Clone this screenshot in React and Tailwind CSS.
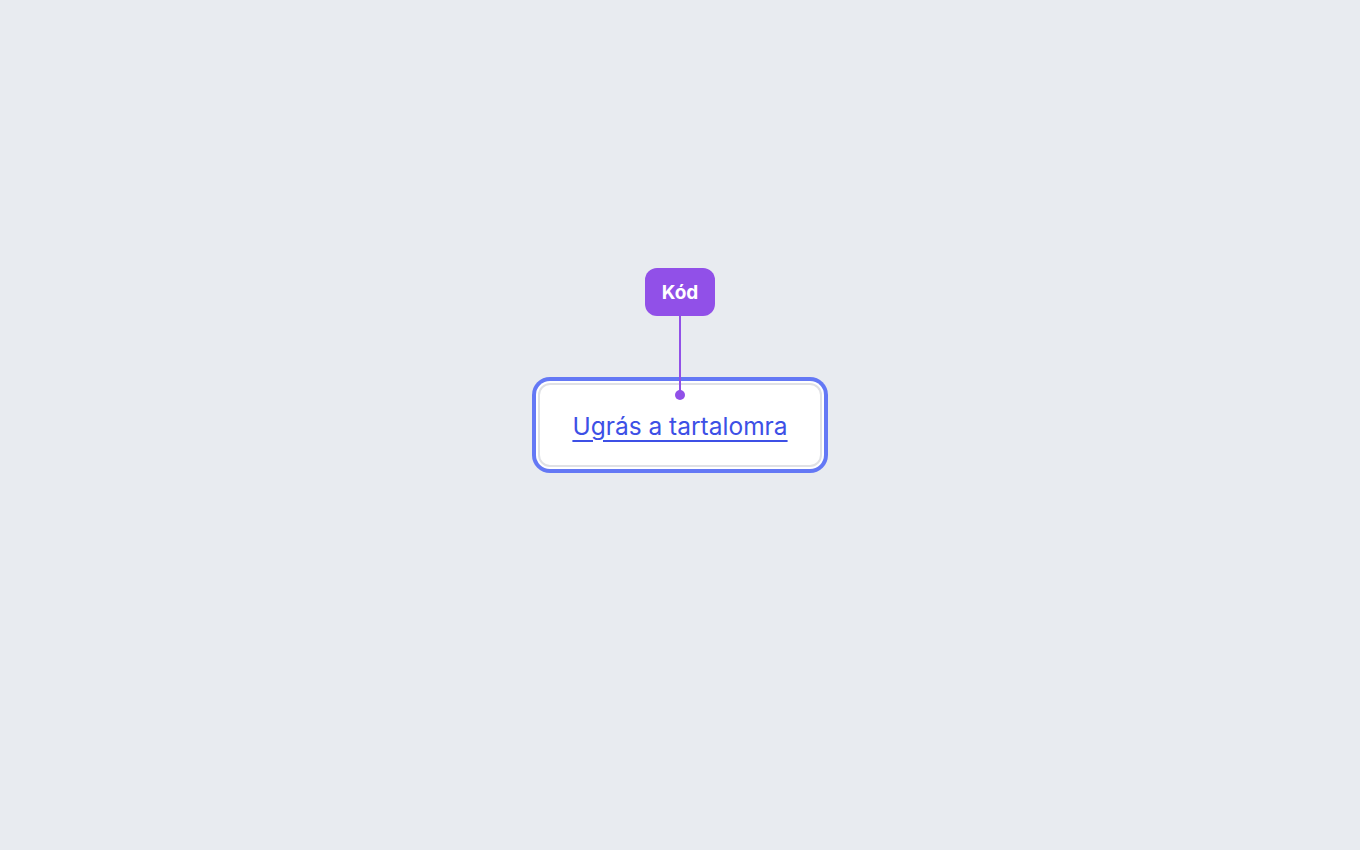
export default function App() {
  return (
    <div className="min-h-screen w-full flex items-center justify-center bg-[#e8ebf0]" style={{ fontFamily: "Inter, 'Noto Sans', sans-serif" }}>
      <div className="relative">
        <a
          href="#main"
          className="flex items-center justify-center pt-[1px] w-[284px] h-[84px] rounded-[12px] border-2 border-[#e0e1e5] bg-white ring-4 ring-[#6478f5] ring-offset-2 ring-offset-white text-[24.5px] leading-[30px] text-[#3d50e6] underline decoration-[1.5px] underline-offset-[5px]"
        >
          Ugrás a tartalomra
        </a>
        <div className="absolute left-1/2 -translate-x-1/2 top-[-115px] flex flex-col items-center">
          <div className="w-[70px] h-[48px] pt-[3px] rounded-[12px] bg-[#9150e8] flex items-center justify-center text-white font-bold text-[19px]">
            Kód
          </div>
          <div className="w-[2px] h-[76px] bg-[#9150e8]" />
          <div className="w-[10px] h-[10px] rounded-full bg-[#9150e8] -mt-[2px]" />
        </div>
      </div>
    </div>
  );
}
